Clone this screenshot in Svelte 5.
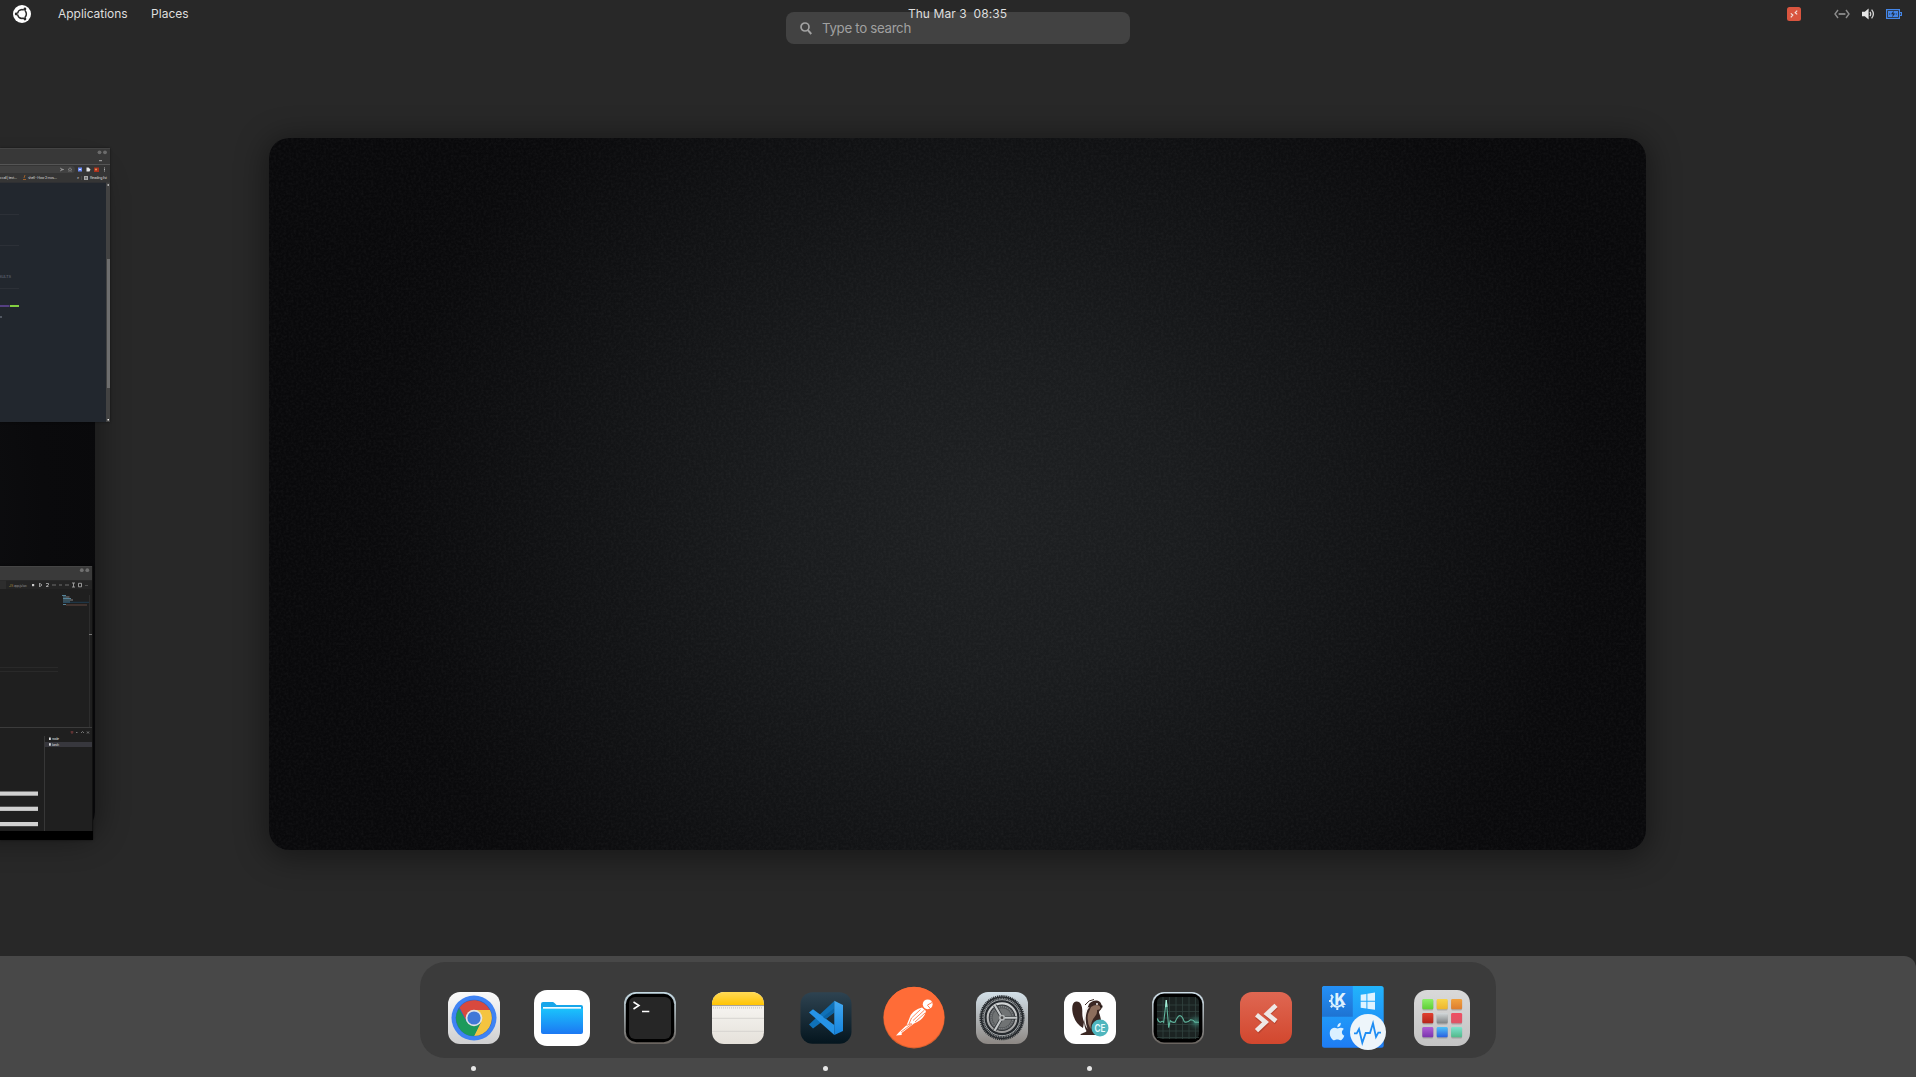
<script>
  const apps = [
    { name: 'chrome', running: true },
    { name: 'files', running: false },
    { name: 'terminal', running: false },
    { name: 'notes', running: false },
    { name: 'code', running: true },
    { name: 'postman', running: false },
    { name: 'settings', running: false },
    { name: 'dbeaver', running: true },
    { name: 'monitor', running: false },
    { name: 'remote', running: false },
    { name: 'machines', running: false },
    { name: 'launcher', running: false }
  ];

  const tiles = [
    ['#8df06a', '#5fcf35'], ['#f8d54a', '#eeb52e'], ['#f2a23e', '#dd7d30'],
    ['#e0402f', '#b5251c'], ['#d3d8da', '#7f8384'], ['#ee4f63', '#dd5566'],
    ['#b05fd6', '#7a34ad'], ['#4fc3f7', '#2a5fe0'], ['#7fe3cf', '#52b98a']
  ];

  const gridLines = [17, 23.5, 30, 36.5, 43, 49.5];
</script>

<div class="shell">
  <header class="topbar">
    <nav class="left">
      <svg class="logo" width="18" height="18" viewBox="0 0 18 18">
        <circle cx="9" cy="9" r="9" fill="#fff" />
        <circle cx="9" cy="9" r="4.300" fill="none" stroke="#2b2b2b" stroke-width="1.700" />
        <g stroke="#fff" stroke-width="1">
          <path d="M9 9H3M9 9l3.1-5.3M9 9l3.1 5.3" />
        </g>
        <circle cx="9" cy="9" r="3.300" fill="#fff" />
        <g fill="#2b2b2b">
          <circle cx="3.2" cy="9" r="1.4" /><circle cx="11.9" cy="4" r="1.4" /><circle cx="11.9" cy="14" r="1.4" />
        </g>
      </svg>
      <span class="apps">Applications</span>
      <span>Places</span>
    </nav>
    <span class="clock">Thu Mar 3&nbsp; 08:35</span>
    <div class="status">
      <svg class="tray" width="14" height="14" viewBox="0 0 14 14">
        <rect width="14" height="14" rx="2.5" fill="#d9553f" />
        <path d="M3.800 6.400l2 1.700-2 2.200M10.200 3.700L8.200 5.700l2 1.700" fill="none" stroke="#f3e3df" stroke-width="1.200" />
      </svg>
      <svg class="net" width="16" height="10" viewBox="0 0 16 10" fill="none" stroke="#8d8d8d" stroke-width="1.4">
        <path d="M4 1L1 5l3 4M12 1l3 4-3 4" /><path d="M4.6 5h6.8" stroke-width="1.8" />
      </svg>
      <svg class="vol" width="13" height="12" viewBox="0 0 13 12">
        <path d="M0 3.7h2.8L6.6.5v11L2.8 8.3H0z" fill="#e6e6e6" />
        <path d="M8 3.8q1.4 2.2 0 4.4M9.6 1.6q3.6 4.4 0 8.8" fill="none" stroke="#d5d5d5" stroke-width="1.3" />
      </svg>
      <svg width="16" height="10" viewBox="0 0 16 10">
        <path d="M.6.6h12.8v8.8H.6zM13.5 3.5h1.9v3h-1.9z" fill="none" stroke="#4486e8" stroke-width="1.2" />
        <path d="M2 2h10v6H2z" fill="#4486e8" />
        <path d="M7.6 1.8L5 5.2h1.9l-.8 3 3.2-3.7H7.4zM3.2 4.5h1v1h-1zM9.8 4.5h1v1h-1z" fill="#202a3c" />
      </svg>
    </div>
  </header>

  <div class="search">
    <svg width="12" height="13" viewBox="0 0 12 13" fill="none" stroke="#a2a2a2">
      <circle cx="5" cy="5" r="4" stroke-width="1.7" /><path d="M7.9 8.2l3.4 3.8" stroke-width="2" />
    </svg>
    <span>Type to search</span>
  </div>

  <main class="overview">
    <div class="desktop previous"></div>
    <svg class="window browser" width="110" height="274" viewBox="0 0 110 274">
      <rect width="110" height="274" fill="#383838" />
      <path d="M0 .5h110" stroke="#444" />
      <circle cx="99.5" cy="4.3" r="1.9" fill="#6b6b6b" /><circle cx="105" cy="4.3" r="1.9" fill="#6b6b6b" />
      <path d="M99 12.7h3" stroke="#aaa" />
      <rect y="16" width="110" height="1" fill="#555" />
      <rect y="17" width="110" height="17.5" fill="#353535" />
      <path d="M0 18h71.500a3.500 3.500 0 0 1 0 7H0z" fill="#414141" />
      <path d="M60 20l3 1.500-3 1.500M61 21.500h3" stroke="#999" stroke-width=".8" fill="none" />
      <path d="M70 19.600l.6 1.500h1.400l-1.100.9.400 1.400-1.300-.8-1.300.8.400-1.400-1.100-.9h1.400z" stroke="#999" stroke-width=".5" fill="none" />
      <rect x="78" y="19.500" width="4" height="4" fill="#6d8bf5" />
      <rect x="79" y="21" width="2" height="1" fill="#dfe6ff" />
      <path d="M86.500 19.500h2l2 2-1 2h-3z" fill="#e4e4e4" />
      <rect x="94" y="19.500" width="5" height="4.500" fill="#a8311d" /><circle cx="96" cy="21.500" r="1" fill="#e39a5e" />
      <path d="M104.500 19.500v4" stroke="#aaa" stroke-dasharray="1 .5" />
      <g font-size="3.600" fill="#d4d4d4">
        <text x="-1" y="31.400" textLength="18">o call | text…</text>
        <text x="28" y="31.400" textLength="29">shell - How 2 mos…</text>
        <text x="77" y="31.400">»</text>
        <text x="90" y="31.400" textLength="17">Reading list</text>
      </g>
      <path d="M23 31.500h3M24 30l1-3" stroke="#9c5f2a" />
      <path d="M81.500 28v4" stroke="#555" stroke-width=".6" />
      <rect x="84" y="28" width="4" height="4" fill="#aaa" /><path d="M85 29.500h2M85 30.700h2" stroke="#444" stroke-width=".5" />
      <rect y="34.700" width="106" height="239.300" fill="#22272e" />
      <path d="M0 66.500h19M0 97.500h19M0 140.500h19" stroke="#2c3037" />
      <text x="-1" y="130" font-size="4" fill="#6b7280" textLength="12">SULTS</text>
      <rect y="157" width="9.500" height="2" fill="#553f82" /><rect x="10" y="157" width="9" height="2" fill="#83d040" />
      <rect y="168" width="2" height="2" fill="#515761" />
      <rect x="106" y="34.700" width="4" height="239.300" fill="#424242" />
      <rect x="107" y="111" width="3" height="129" fill="#6e6e6e" />
      <rect x="107.500" y="36" width="1.500" height="2" fill="#aaa" /><rect x="107.500" y="271" width="1.500" height="1.500" fill="#eee" />
    </svg>
    <svg class="window editor" width="93" height="274" viewBox="0 0 93 274">
      <rect width="93" height="274" fill="#1f1f1f" />
      <rect width="93" height="14.500" fill="#3a3a3a" /><path d="M0 .5h93" stroke="#454545" />
      <circle cx="81.800" cy="4.200" r="1.900" fill="#707070" /><circle cx="87.300" cy="4.200" r="1.900" fill="#707070" />
      <rect y="14.500" width="93" height="8.500" fill="#242424" /><rect y="14.500" width="6" height="8.500" fill="#2d2d2d" />
      <text x="9" y="20.500" font-size="3.500" fill="#a8853a">JS</text>
      <text x="14" y="20.500" font-size="3.400" fill="#8a8a8a" textLength="13">app.js/src</text>
      <rect x="32" y="18" width="2.200" height="2.200" fill="#ccc" />
      <g stroke="#a5a5a5" stroke-width=".9" fill="none">
        <path d="M39.500 17v4M40 17.500l2 1.500-2 1.500M46 17.500h2.500v1.500L46 20.500h2.500" />
        <path d="M52 19h4M59 19h3M65 19h4" stroke="#777" />
        <path d="M73.500 17v4M72 17h3M72 21h3M78.500 17.300h3v3.500h-3z" />
        <path d="M85 19.500h3" stroke="#555" />
      </g>
      <path d="M62 29.500h4M63 31h6M63 32.500h8M63 34h10M63 36h7M63 38.500h3" stroke="#568296" stroke-width="1.200" />
      <path d="M66 31h4M70 34h3M66 39h21" stroke="#735449" stroke-width=".8" />
      <path d="M63 36.300h26" stroke="#214764" stroke-width=".7" />
      <path d="M89.500 29v132" stroke="#2d2d2d" /><path d="M89 68.500h4" stroke="#777" />
      <path d="M0 101.500h58M0 105.500h58" stroke="#292929" />
      <rect y="161" width="93" height="1" fill="#3b3b3b" />
      <path d="M70.500 166h3M72 165v3" stroke="#864040" stroke-width=".8" />
      <path d="M76 166.500h1.500M81 167l1.500-1.500 1.500 1.500M87 165.500l2 2M89 165.500l-2 2" stroke="#8c8c8c" stroke-width=".8" fill="none" />
      <path d="M44.500 170v95" stroke="#373737" />
      <rect x="45" y="176" width="48" height="5" fill="#37373d" />
      <g fill="#ddd" font-size="3.500">
        <rect x="49" y="171.500" width="1.800" height="2.500" /><text x="52" y="174" textLength="7">node</text>
        <rect x="49" y="177.200" width="1.800" height="2.500" /><text x="52" y="179.800" textLength="7">bash</text>
      </g>
      <g fill="#d0d0d0">
        <rect y="225.500" width="38" height="4.200" /><rect y="240.700" width="38" height="4.200" /><rect y="256" width="38" height="4.200" />
      </g>
      <rect x="92" width="1" height="265" fill="#111" />
      <rect y="265" width="93" height="9" fill="#000" />
    </svg>
    <div class="desktop current">
      <svg class="grain" width="1378" height="712">
        <filter id="grain" x="0" y="0" width="100%" height="100%">
          <feTurbulence type="fractalNoise" baseFrequency=".4" numOctaves="2" seed="4" />
          <feColorMatrix values="0 0 0 0 1  0 0 0 0 1  0 0 0 0 1  .07 0 0 0 -.026" />
        </filter>
        <rect width="1378" height="712" filter="url(#grain)" />
      </svg>
    </div>
  </main>

  <footer class="dashbar">
    <div class="dash">
      {#each apps as app}
        <div class="item">
          <svg width="64" height="64" viewBox="0 0 64 64">
            {#if app.name === 'chrome'}
              <defs>
                <linearGradient id="chBg" x2="0" y2="1"><stop stop-color="#fafafa" /><stop offset="1" stop-color="#cfcfd0" /></linearGradient>
              </defs>
              <rect x="6" y="6" width="52" height="52" rx="12" fill="url(#chBg)" />
              <circle cx="32" cy="32" r="22.500" fill="#3f83f4" />
              <circle cx="32" cy="32" r="18.300" fill="#2d63c4" />
              <path d="M32 24H48A18 18 0 0 1 32 50L39 36z" fill="#f4c440" />
              <path d="M17.500 21.500A18 18 0 0 1 47.900 24H32L24 34z" fill="#d8493e" />
              <path d="M16.800 22.500L24.500 35.500 31 40 38.500 37 32 50A18 18 0 0 1 16.800 22.500z" fill="#1d9a5b" />
              <circle cx="32" cy="32" r="8.300" fill="#e2e3e4" /><circle cx="32" cy="32" r="6.600" fill="#4078d8" />
            {:else if app.name === 'files'}
              <defs>
                <linearGradient id="fiBg" x2="0" y2="1"><stop stop-color="#1ac3fc" /><stop offset="1" stop-color="#1c78f3" /></linearGradient>
              </defs>
              <rect x="4" y="4" width="56" height="56" rx="13" fill="#fff" />
              <path d="M11 18q0-2 2-2h9.500q1 0 2 1l2 2H51q2 0 2 2v5H11z" fill="#17a6ea" />
              <path d="M11 22.500h42V46q0 2-2 2H13q-2 0-2-2z" fill="url(#fiBg)" />
              <rect x="13" y="21" width="38" height="1.700" fill="#f1fbff" />
            {:else if app.name === 'terminal'}
              <defs>
                <linearGradient id="teRim" x2="0" y2="1"><stop stop-color="#c5dae4" /><stop offset="1" stop-color="#69635e" /></linearGradient>
              </defs>
              <rect x="6" y="6" width="52" height="52" rx="12" fill="url(#teRim)" />
              <rect x="7.800" y="7.800" width="48.400" height="48.400" rx="10.500" fill="#000" />
              <rect x="11" y="11" width="42" height="42" rx="6" fill="#262626" />
              <path d="M15.500 16l5.500 3.500-5.500 3.500M24 25.400h7.300" fill="none" stroke="#fff" stroke-width="1.500" />
            {:else if app.name === 'notes'}
              <defs>
                <linearGradient id="noTop" x2="0" y2="1"><stop stop-color="#ffda57" /><stop offset="1" stop-color="#ffc403" /></linearGradient>
                <linearGradient id="noBody" x2="0" y2="1"><stop stop-color="#fbfaf8" /><stop offset="1" stop-color="#e5e1da" /></linearGradient>
                <clipPath id="noClip"><rect x="6" y="6" width="52" height="52" rx="12" /></clipPath>
              </defs>
              <g clip-path="url(#noClip)">
                <rect x="6" y="6" width="52" height="52" fill="url(#noBody)" />
                <rect x="6" y="6" width="52" height="13" fill="url(#noTop)" />
                <path d="M6 19.600h52" stroke="#a19c94" />
                <path d="M7 21.800h50" stroke="#c8c5c0" stroke-width="1.300" stroke-dasharray=".9 1.100" />
                <path d="M6 32.300h52M6 45.300h52" stroke="#d6d4d0" />
              </g>
            {:else if app.name === 'code'}
              <defs>
                <linearGradient id="coBg" x2="0" y2="1"><stop stop-color="#2e4351" /><stop offset="1" stop-color="#04151e" /></linearGradient>
                <linearGradient id="coSlab" x2="0" y2="1"><stop stop-color="#42a9f2" /><stop offset="1" stop-color="#1583dc" /></linearGradient>
              </defs>
              <rect x="6.500" y="6.300" width="51" height="51.500" rx="12" fill="url(#coBg)" />
              <path d="M15 38.500L40.300 15v11.500L19 42.500z" fill="#0f71b8" />
              <path d="M15 26.500l4-3.300L40.300 39v10z" fill="#2693e6" />
              <path d="M29 31l11-8.500v4L31.500 33z" fill="#0b64a6" />
              <path d="M40.300 14.700L49 19v26l-8.700 4z" fill="url(#coSlab)" />
            {:else if app.name === 'postman'}
              <circle cx="32" cy="31.700" r="30.700" fill="#d9602f" />
              <circle cx="32" cy="31" r="30.200" fill="#ff6c37" />
              <circle cx="45.700" cy="18.300" r="4.900" fill="#fff" />
              <path d="M45.500 19l4.500-2.500M45.500 19.300l3 3.500" stroke="#ff6c37" stroke-width=".9" />
              <path d="M40 21.500q-8 2-11.300 7.500L24.700 39 17 46.300l-3 3.200 5.700-.5v-2L32 37.500q10-3.500 12-12.500z" fill="#fff" />
              <path d="M42.500 24L31 34.500M38.500 23.500L29.500 32 27 38M43 27L33 36M24.500 39.500l5-2M30 38l-11 8" stroke="#ff6c37" stroke-width=".8" fill="none" />
            {:else if app.name === 'settings'}
              <defs>
                <linearGradient id="seBg" x2="0" y2="1"><stop stop-color="#d3e0e8" /><stop offset="1" stop-color="#8d8884" /></linearGradient>
                <linearGradient id="seMetal" x2="0" y2="1"><stop stop-color="#d2d5d6" /><stop offset="1" stop-color="#9c9c9c" /></linearGradient>
              </defs>
              <rect x="6" y="6" width="52" height="52" rx="12" fill="url(#seBg)" />
              <circle cx="32" cy="31.700" r="21.500" fill="#25292d" />
              <circle cx="32" cy="31.700" r="21.800" fill="none" stroke="#25292d" stroke-width="1.600" stroke-dasharray="1.100 .8" />
              <circle cx="32" cy="31.700" r="19.200" fill="none" stroke="#8d9193" stroke-width="1.500" stroke-dasharray=".9 .8" />
              <circle cx="32" cy="31.700" r="18" fill="none" stroke="#a3a7a9" stroke-width="1" />
              <circle cx="32" cy="31.700" r="12.500" fill="#55585a" />
              <circle cx="32" cy="31.700" r="11" fill="none" stroke="#83878a" stroke-width="1.300" stroke-dasharray="1.200 .9" />
              <circle cx="32" cy="31.700" r="9.500" fill="#707374" />
              <circle cx="32" cy="31.700" r="14.300" fill="none" stroke="url(#seMetal)" stroke-width="2.100" />
              <path d="M32 31.700h14.500M32 31.700l-7.300-12.600M32 31.700l-7.300 12.600" stroke="#33373a" stroke-width="3.600" />
              <path d="M32 31.700h15M32 31.700l-7.500-13M32 31.700l-7.500 13" stroke="#c4c7c8" stroke-width="2.100" />
              <circle cx="32" cy="31.700" r="3" fill="#b2b5b6" /><circle cx="32" cy="31.700" r="1.400" fill="#444" />
            {:else if app.name === 'dbeaver'}
              <rect x="6" y="6" width="52" height="52" rx="12" fill="#fff" />
              <path d="M18 15.500c5-.5 6.500 5 6.300 10.500-.1 4 .5 7 1.700 10l-1 6q-7-4-9.500-12c-2-6.500-2-13.500 2.500-14.500z" fill="#3a2723" />
              <path d="M31 18c3-3 7-5 11-2 1.500 2 2.500 4.500 1.500 6.500-1 2-2.500 2-2.500 4 1 3 2.500 7 2 12L38 49H22.500c0-2 5-2 6-4-3-5-3-13-.5-19z" fill="#3a2723" />
              <path d="M33 21q4-3 8-1.500l2 2q-1 2.500-4 2.500 .5 4-2 6.500-4 4-4.500 12.500-4-7-2.500-15z" fill="#8c6e5d" />
              <path d="M28 22q-3 7-1.500 14 1 5 3 7-3-9-1-16 1-4 3-6z" fill="#f5f2ef" />
              <path d="M27 19q4-5.500 9-5.500" stroke="#3a2723" fill="none" />
              <circle cx="39" cy="18" r=".9" fill="#fff" /><path d="M42 19.500h2.500v2H42z" fill="#241714" />
              <circle cx="42" cy="42" r="8.500" fill="#4fb6be" />
              <text x="36.500" y="45.700" font-size="10" font-weight="600" fill="#e9fbfc" textLength="11" lengthAdjust="spacingAndGlyphs">CE</text>
            {:else if app.name === 'monitor'}
              <defs>
                <linearGradient id="moRim" x2="0" y2="1"><stop stop-color="#cfe0ea" /><stop offset="1" stop-color="#69635e" /></linearGradient>
                <radialGradient id="moGlow" cx="50" cy="36" r="10" gradientUnits="userSpaceOnUse"><stop stop-color="#3b8274" /><stop offset="1" stop-color="#1d2624" stop-opacity="0" /></radialGradient>
              </defs>
              <rect x="6" y="6" width="52" height="52" rx="12" fill="url(#moRim)" />
              <rect x="7.600" y="7.600" width="48.800" height="48.800" rx="10.500" fill="#000" />
              <rect x="11" y="11" width="42" height="42" rx="5" fill="#1b2322" />
              {#each gridLines as g}
                <path d="M{g} 11v42M11 {g + 2}h42" stroke="#31433f" stroke-width=".8" />
              {/each}
              <rect x="38" y="24" width="15" height="24" fill="url(#moGlow)" />
              <path d="M11.300 32.500q1 3.500 3.400 3.800 1.500-2 3 0L20.300 14l2.400 27.700 1.500-7q1.500 2 4.800 1.600 5-13 9.300-.6 3 1.500 6.400-2 3 0 4.300 2.600h4" fill="none" stroke="#5fb59d" stroke-width="1.100" />
              <path d="M20.300 14l-.6 7M20.300 14l.7 7" stroke="#aef5df" />
            {:else if app.name === 'remote'}
              <defs>
                <linearGradient id="reBg" x2="0" y2="1"><stop stop-color="#df6752" /><stop offset="1" stop-color="#d2472e" /></linearGradient>
              </defs>
              <rect x="6" y="6" width="52" height="52" rx="12" fill="url(#reBg)" />
              <g fill="none" stroke-width="4.600">
                <path d="M22.700 30.500l9 7.300-8.500 8.200M42.300 20.700l-9 8.500 9 7.300" stroke="#a73b28" opacity=".6" />
                <path d="M22.500 28.700l9 7.500-9 8.500M42 19.300l-9 8.500 9 7.300" stroke="#eee8e6" />
              </g>
            {:else if app.name === 'machines'}
              <defs>
                <linearGradient id="maBg" x2="0" y2="1"><stop stop-color="#22b4fb" /><stop offset="1" stop-color="#1e7cf5" /></linearGradient>
                <linearGradient id="maKde" x2="0" y2="1"><stop stop-color="#2490f7" /><stop offset="1" stop-color="#1e73d2" /></linearGradient>
              </defs>
              <rect width="61.700" height="61.700" rx="2.500" fill="url(#maBg)" />
              <path d="M0 2.500Q0 0 2.500 0h28.300v30.800H0z" fill="url(#maKde)" />
              <path d="M11.300 10.200a6 6 0 1 0 9.300 7.300" fill="none" stroke="#d9effd" stroke-width="2" />
              <path d="M10.500 10.500L8.800 9M9.200 15H7M10.500 19.500l-1.700 1.700M15.300 21.500V24M20 19.500l2 1.800" stroke="#d9effd" stroke-width="2" />
              <text x="12.500" y="19" font-size="16.500" font-weight="800" fill="#e0f2fe" textLength="11.500" lengthAdjust="spacingAndGlyphs">K</text>
              <path d="M38.700 8.700l5.700-.8v6.800h-5.700zM45.400 7.700L53 6.600v8.100h-7.600zM38.700 15.700h5.700v6.800l-5.700-.8zM45.400 15.700H53v8.100l-7.600-1.100z" fill="#dff3ff" />
              <path d="M15.500 42.500q-2.500-1.300-4.500-.5c-5 2-3.500 9.500 0 12 1.800.8 2.700-.4 4.300-.4s2.600 1.200 4.200.4q2-1.600 2.800-4.300c-3.200-1.600-3-5.300-.3-6.700q-2.500-2.400-6.500-.5z" fill="#dbf0ff" />
              <path d="M15.300 41.300q0-3.700 3.500-4.500.2 4-3.500 4.500z" fill="#dbf0ff" />
              <circle cx="46" cy="46" r="18" fill="#eef5fa" />
              <path d="M32 47.300h2.700L37 43l3.300 13.800 3.400-9.800H48l3-9.700L54 51l2.300-4.300H59" fill="none" stroke="#1f8df3" stroke-width="1.800" />
            {:else}
              <defs>
                <linearGradient id="laBg" x2="0" y2="1"><stop stop-color="#d9d9d9" /><stop offset="1" stop-color="#c3c3c3" /></linearGradient>
                {#each tiles as [top, bottom], i}
                  <linearGradient id="tile{i}" x2="0" y2="1"><stop stop-color={top} /><stop offset="1" stop-color={bottom} /></linearGradient>
                {/each}
              </defs>
              <rect x="4" y="4" width="56" height="56" rx="13" fill="url(#laBg)" />
              {#each tiles as _, i}
                <rect x={12.300 + (i % 3) * 14.400} y={14 + Math.floor(i / 3) * 14} width="11" height="10.500" rx="1.500" fill="#000" opacity=".18" />
                <rect x={12.300 + (i % 3) * 14.400} y={13 + Math.floor(i / 3) * 14} width="11" height="10.300" rx="1.300" fill="url(#tile{i})" />
              {/each}
            {/if}
          </svg>
          {#if app.running}<span class="dot"></span>{/if}
        </div>
      {/each}
    </div>
  </footer>
</div>

<style>
  :global(body) {
    margin: 0;
    background: #282828;
  }

  .shell {
    display: flex;
    flex-direction: column;
    height: 1077px;
    overflow: hidden;
    background: #282828;
    font-family: Inter, "Liberation Sans", sans-serif;
    color: #dedede;
  }

  .topbar {
    display: grid;
    grid-template-columns: 1fr auto 1fr;
    align-items: center;
    height: 28px;
    font-size: 12px;
    line-height: 28px;
    z-index: 1;
  }

  .left {
    display: flex;
    align-items: center;
    gap: 23.500px;
    padding-left: 13px;
  }

  .logo {
    margin-right: 3.500px;
  }

  .apps {
    letter-spacing: -0.03px;
  }

  .clock {
    letter-spacing: 0.07px;
    margin-right: 1px;
  }

  .status {
    display: flex;
    align-items: center;
    justify-content: flex-end;
    padding-right: 14px;
  }

  .tray {
    margin-right: 33px;
  }

  .net {
    margin-right: 12px;
  }

  .vol {
    margin-right: 11px;
  }

  .search {
    display: flex;
    align-items: center;
    gap: 10px;
    box-sizing: border-box;
    width: 344px;
    height: 32px;
    margin: -16px auto 0;
    padding-left: 14px;
    border-radius: 8px;
    background: #424242;
    color: #a0a0a0;
    font-size: 13.300px;
    letter-spacing: -0.32px;
  }

  .overview {
    position: relative;
    flex: 1;
    padding-top: 94px;
  }

  .desktop {
    border-radius: 20px;
    background: radial-gradient(ellipse 50% 84% at 52% 53%, #1e2022 0%, #1a1c1e 28%, #111214 62%, #0a0a0c 88%, #09090b 100%);
    box-shadow: 0 4px 30px 4px rgba(0, 0, 0, 0.4);
  }

  .current {
    overflow: hidden;
    width: 1377px;
    height: 712px;
    margin: 0 270px 0 269px;
  }

  .grain {
    display: block;
  }

  .previous {
    position: absolute;
    right: 1821px;
    top: 126px;
    width: 1280px;
    height: 662px;
  }

  .window {
    position: absolute;
    left: 0;
    box-shadow: 0 0 2px #0008;
  }

  .browser {
    top: 104px;
  }

  .editor {
    top: 522px;
  }

  .dashbar {
    height: 121px;
    border-radius: 0 12px 0 0;
    background: #484848;
  }

  .dash {
    display: flex;
    gap: 24px;
    box-sizing: border-box;
    width: 1076px;
    height: 96px;
    margin: 6px auto 0;
    padding: 24px 22px 8px;
    border-radius: 25px;
    background: #3b3b3b;
  }

  .item {
    position: relative;
    width: 64px;
    height: 64px;
  }

  .item svg {
    display: block;
    overflow: visible;
  }

  .dot {
    position: absolute;
    left: 29px;
    top: 80px;
    width: 5px;
    height: 5px;
    border-radius: 50%;
    background: #e6e6e6;
  }
</style>
